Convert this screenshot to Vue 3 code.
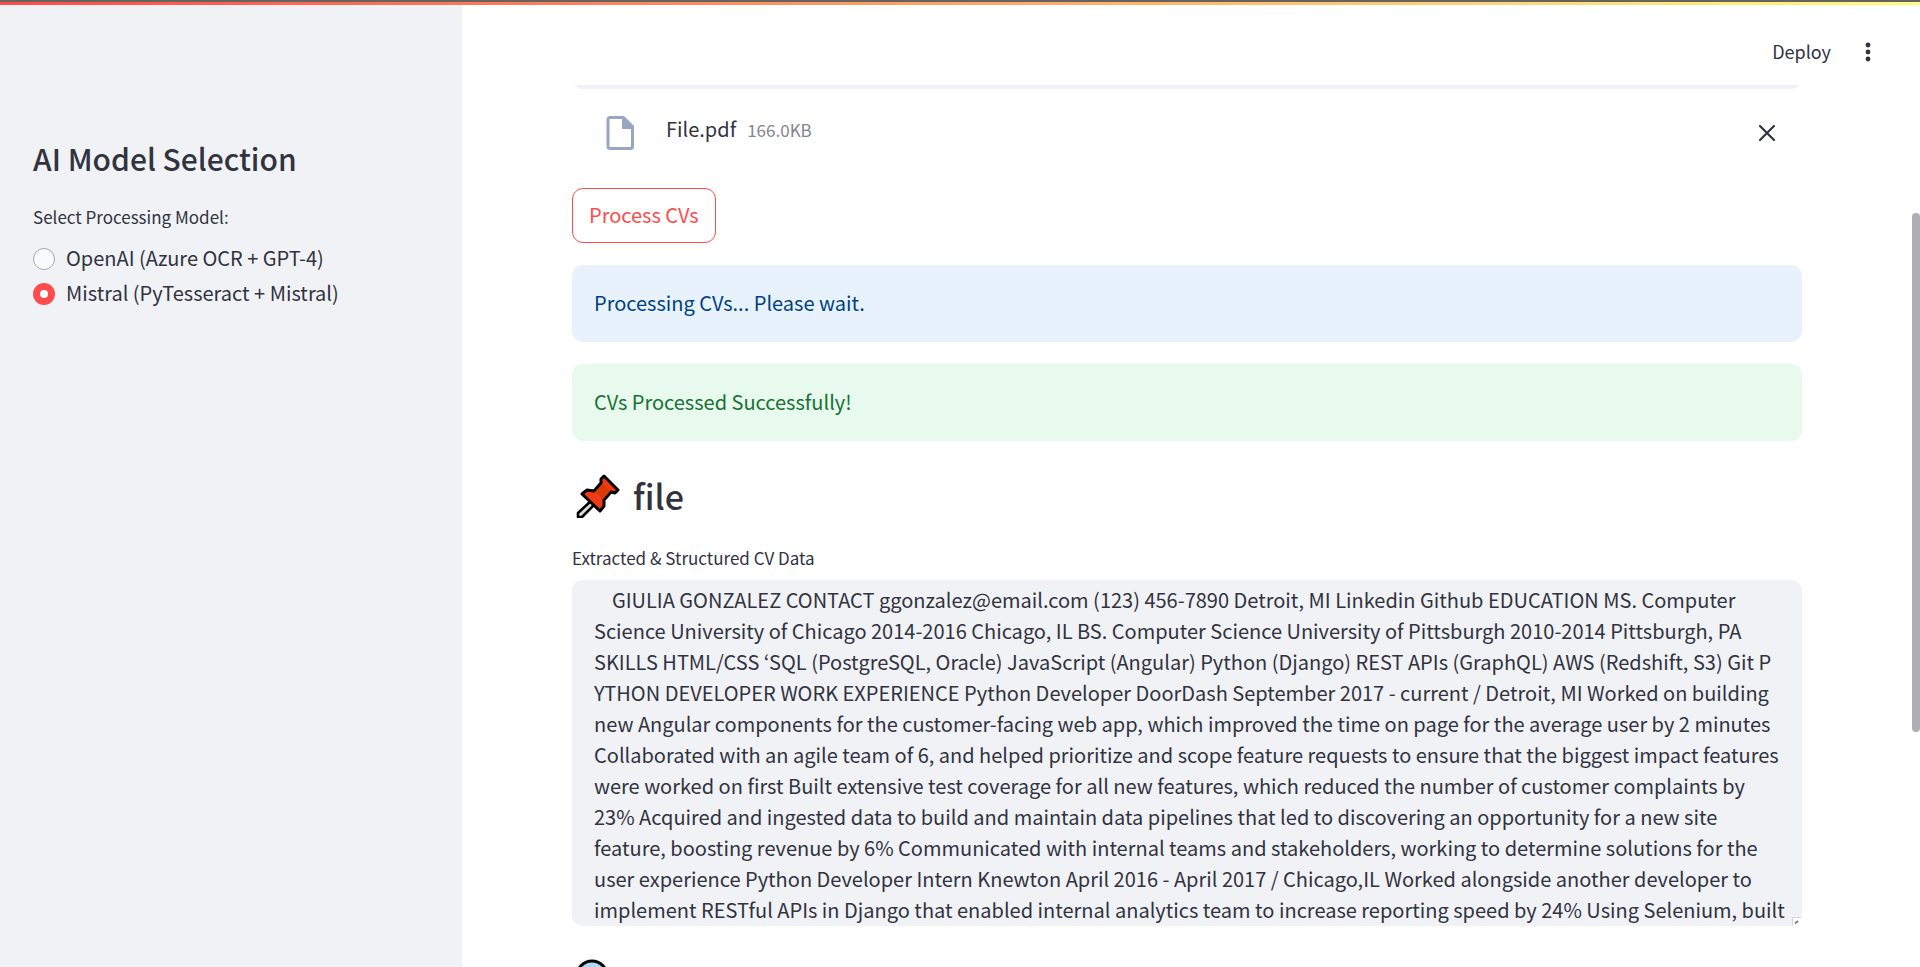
<script setup>
import { ref } from 'vue'

const models = ['OpenAI (Azure OCR + GPT-4)', 'Mistral (PyTesseract + Mistral)']
const selected = ref(models[1])
const cvText = ref([
  '\u00a0\u00a0\u00a0 GIULIA GONZALEZ CONTACT ggonzalez@email.com (123) 456-7890 Detroit, MI Linkedin Github EDUCATION MS. Computer',
  'Science University of Chicago 2014-2016 Chicago, IL BS. Computer Science University of Pittsburgh 2010-2014 Pittsburgh, PA',
  'SKILLS HTML/CSS ‘SQL (PostgreSQL, Oracle) JavaScript (Angular) Python (Django) REST APIs (GraphQL) AWS (Redshift, S3) Git P',
  'YTHON DEVELOPER WORK EXPERIENCE Python Developer DoorDash September 2017 - current / Detroit, MI Worked on building',
  'new Angular components for the customer-facing web app, which improved the time on page for the average user by 2 minutes',
  'Collaborated with an agile team of 6, and helped prioritize and scope feature requests to ensure that the biggest impact features',
  'were worked on first Built extensive test coverage for all new features, which reduced the number of customer complaints by',
  '23% Acquired and ingested data to build and maintain data pipelines that led to discovering an opportunity for a new site',
  'feature, boosting revenue by 6% Communicated with internal teams and stakeholders, working to determine solutions for the',
  'user experience Python Developer Intern Knewton April 2016 - April 2017 / Chicago,IL Worked alongside another developer to',
  'implement RESTful APIs in Django that enabled internal analytics team to increase reporting speed by 24% Using Selenium, built',
].join('\n'))
</script>

<template>
  <div class="app">
    <div class="decoration"></div>
    <aside class="sidebar">
      <h2>AI Model Selection</h2>
      <fieldset>
        <legend>Select Processing Model:</legend>
        <label v-for="m in models" :key="m" class="radio">
          <input v-model="selected" type="radio" name="model" :value="m" />
          <span>{{ m }}</span>
        </label>
      </fieldset>
    </aside>
    <div class="page">
      <header>
        <button class="deploy" type="button">Deploy</button>
        <button class="menu" type="button" aria-label="Main menu">
          <svg width="6" height="20" viewBox="0 0 6 20" fill="#31333f"><circle cx="3" cy="3" r="2.4" /><circle cx="3" cy="10" r="2.4" /><circle cx="3" cy="17" r="2.4" /></svg>
        </button>
      </header>
      <main>
        <div class="dropzone-edge"><div class="dropzone"></div></div>
        <div class="file-row">
          <svg class="file-icon" width="28" height="34" viewBox="0 0 28 34">
            <path d="M4 1.5h13.5l9 9V30.500a2 2 0 0 1-2 2H4a2 2 0 0 1-2-2v-27a2 2 0 0 1 2-2z" fill="#fff" stroke="#97a6c3" stroke-width="3" stroke-linejoin="round" />
            <path d="M16 1h2l9 9v3H16z" fill="#97a6c3" />
          </svg>
          <div class="file-text">
            <span class="file-name">File.pdf</span>
            <span class="file-size">166.0KB</span>
          </div>
          <button class="remove" type="button" aria-label="Remove File.pdf">
            <svg width="18" height="18" viewBox="0 0 18 18"><path d="M2 2l14 14M16 2L2 16" stroke="#31333f" stroke-width="2.200" stroke-linecap="round" /></svg>
          </button>
        </div>
        <button class="process" type="button">Process CVs</button>
        <div class="alert info" role="status">Processing CVs... Please wait.</div>
        <div class="alert success" role="status">CVs Processed Successfully!</div>
        <h1>
          <svg class="pin" width="44" height="44" viewBox="0 0 44 44" stroke="#000" stroke-linejoin="round">
            <path d="M16 26L2 39v4h4l13-13z" fill="#dedede" stroke-width="2.600" />
            <path d="M28 2L42 16l-3 3-4-1-7 8v6l-4 5L6 20l5-4 7 1 7-8v-4z" fill="#f03a17" stroke-width="3" />
            <path d="M19 18l8-8 7 7-7 8z" fill="#d83b01" stroke="none" />
          </svg>
          <span>file</span>
        </h1>
        <label class="field-label" for="cv">Extracted &amp; Structured CV Data</label>
        <div class="area">
          <textarea id="cv" v-model="cvText" spellcheck="false"></textarea>
          <svg class="grip" width="9" height="9" viewBox="0 0 9 9"><path d="M0 0h9v3a6 6 0 0 1-6 6H0z" fill="#fff" /><path d="M.5 9V.5H9" fill="none" stroke="#d4d4d8" /><path d="M3 6.500l3-2.500" stroke="#555" stroke-width="1.500" /></svg>
        </div>
        <svg class="next" width="44" height="44" viewBox="0 0 44 44"><circle cx="18" cy="17" r="15" fill="#b0d8f5" stroke="#000" stroke-width="3" /></svg>
      </main>
      <div class="scroll-thumb"></div>
    </div>
  </div>
</template>

<style>
body { margin: 0; background: #fff; overflow: hidden; }
</style>

<style scoped>
* { box-sizing: border-box; }
.app {
  display: flex;
  height: 100vh;
  overflow: hidden;
  position: relative;
  color: #31333f;
  font: 400 20px/31px "Noto Sans CJK KR", "Noto Sans", sans-serif;
}
button { font: inherit; color: inherit; background: none; border: 0; padding: 0; cursor: pointer; }
svg { display: block; flex: none; }
.decoration {
  position: absolute;
  inset: 0 0 auto;
  height: 5px;
  border-top: 2px solid #66625f;
  background: linear-gradient(90deg, #ff4b4b, #fffd80);
}
.sidebar { flex: 0 0 462px; background: #f0f2f6; padding: 140px 33px 0; }
h2 { margin: 0; font-size: 30px; line-height: 36px; font-weight: 500; }
fieldset { border: 0; margin: 25px 0 0; padding: 0; min-width: 0; }
legend { padding: 0; margin-bottom: 9px; font-size: 17px; line-height: 31px; }
.radio { display: flex; align-items: center; gap: 11px; height: 35px; }
.radio span { padding-bottom: 2px; }
.radio input {
  appearance: none;
  width: 22px;
  height: 22px;
  margin: 0;
  border: 1px solid #a3a8b4;
  border-radius: 50%;
  background: #fafafc;
}
.radio input:checked { border: 7px solid #ff4b4b; background: #fff; }
.page { flex: 1; min-width: 0; position: relative; }
header {
  display: flex;
  justify-content: flex-end;
  align-items: center;
  gap: 34px;
  height: 85px;
  padding: 18px 49px 0 0;
}
.deploy { font-size: 18px; line-height: 30px; padding-bottom: 2px; }
main { display: flex; flex-direction: column; padding: 0 118px 0 110px; }
.dropzone-edge { height: 4px; display: flex; align-items: flex-end; overflow: hidden; }
.dropzone { flex: 1; height: 40px; flex-shrink: 0; border-radius: 11px; background: #f0f2f6; }
.file-row { display: flex; align-items: center; height: 54px; margin: 17px 26px 28px 34px; }
.file-text { display: flex; align-items: baseline; gap: 11px; margin-left: 32px; padding-bottom: 8px; }
.file-size { font-size: 17px; color: #83858c; }
.remove { margin-left: auto; }
.process {
  align-self: flex-start;
  height: 55px;
  padding: 0 16px 2px;
  border: 1px solid #ff4b4b;
  border-radius: 11px;
  color: #ff4b4b;
}
.alert { margin-top: 22px; padding: 22px 22px 24px; border-radius: 11px; }
.info { background: #e8f2fc; color: #004280; }
.success { background: #e8f9ee; color: #177233; }
h1 { display: flex; align-items: center; gap: 13px; margin: 32px 0 0 4px; font-size: 34px; line-height: 46px; font-weight: 500; }
.field-label { margin-top: 22px; font-size: 17px; line-height: 33px; }
.area { position: relative; margin-top: 6px; }
textarea {
  display: block;
  width: 100%;
  height: 346px;
  padding: 4px 22px;
  border: 0;
  border-radius: 11px;
  background: #f0f2f6;
  color: inherit;
  font: inherit;
  white-space: pre;
  overflow: hidden;
  resize: none;
  outline: none;
}
.grip { position: absolute; right: 1px; bottom: 0; }
.next { margin: 33px 0 0 2px; }
.scroll-thumb { position: absolute; right: 0; top: 213px; width: 8px; height: 519px; border-radius: 4px; background: #afaeb3; }
</style>
